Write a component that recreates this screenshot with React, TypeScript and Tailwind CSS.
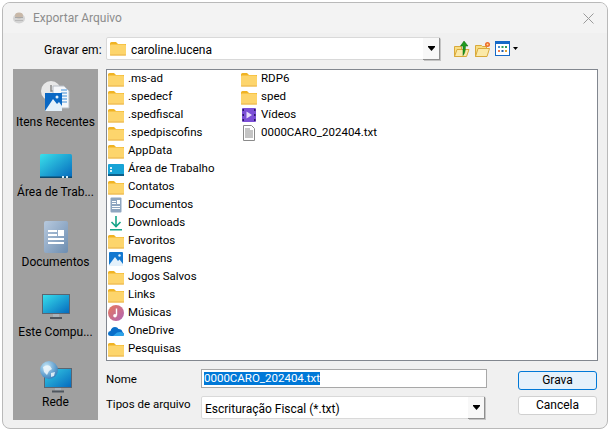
const font = { fontFamily: 'Roboto, sans-serif' };

function FolderIcon() {
  return (
    <svg width="16" height="15" viewBox="0 0 16 15" className="shrink-0">
      <path d="M0 2.500Q0 1 1.500 1H6l2 2h8v3H0z" fill="#f0b323" />
      <rect x="0" y="3.500" width="16" height="11" rx="1" fill="#fdd56c" />
      <rect x="0" y="13.500" width="16" height="1" fill="#e9b44c" />
    </svg>
  );
}

function DesktopSmall() {
  return (
    <svg width="16" height="15" viewBox="0 0 16 15" className="shrink-0">
      <rect x="0" y="2" width="16" height="11" rx="1" fill="#17a3d6" />
      <rect x="0" y="12" width="16" height="2" fill="#0d5f8a" />
      <rect x="2" y="5" width="2" height="2" fill="#d8f3fb" />
      <rect x="2" y="8" width="2" height="2" fill="#d8f3fb" />
    </svg>
  );
}

function DocSmall() {
  return (
    <svg width="16" height="16" viewBox="0 0 16 16" className="shrink-0">
      <rect x="2.500" y="0.500" width="11" height="15" rx="1" fill="#8fa6c0" />
      <rect x="4" y="4" width="4" height="1" fill="#fff" />
      <rect x="4" y="6" width="4" height="1" fill="#fff" />
      <rect x="9" y="3" width="3" height="4" fill="#fff" />
      <rect x="4" y="9" width="8" height="1" fill="#fff" />
      <rect x="4" y="11" width="8" height="1" fill="#fff" />
    </svg>
  );
}

function DownloadSmall() {
  return (
    <svg width="16" height="16" viewBox="0 0 16 16" className="shrink-0">
      <path d="M8 1v10M3.500 7 8 11.500 12.500 7" stroke="#17a589" strokeWidth="1.600" fill="none" />
      <rect x="2" y="14" width="12" height="1.500" fill="#17a589" />
    </svg>
  );
}

function PictureSmall() {
  return (
    <svg width="16" height="16" viewBox="0 0 16 16" className="shrink-0">
      <rect x="1" y="1" width="14" height="14" rx="1" fill="#1278d0" />
      <path d="M1 14 7 6l3 4 1.500-1.500L15 13v2H1z" fill="#e4f1fb" />
      <circle cx="11.500" cy="4.500" r="1.200" fill="#e4f1fb" />
    </svg>
  );
}

function MusicSmall() {
  return (
    <svg width="16" height="16" viewBox="0 0 16 16" className="shrink-0">
      <defs>
        <linearGradient id="mus" x1="0" y1="0" x2="1" y2="1">
          <stop offset="0" stopColor="#e8795a" />
          <stop offset="1" stopColor="#b064b8" />
        </linearGradient>
      </defs>
      <circle cx="8" cy="8" r="8" fill="url(#mus)" />
      <path d="M8.500 3.500v7" stroke="#fff" strokeWidth="1.400" />
      <circle cx="7" cy="10.800" r="1.800" fill="#fff" />
    </svg>
  );
}

function CloudSmall() {
  return (
    <svg width="16" height="12" viewBox="0 0 16 12" className="shrink-0">
      <path d="M3 11Q0 11 0 8.500 0 6.300 2.500 6 3.500 2 7 2q2.500 0 3.500 2Q14 4 14.500 7 16 8 16 9.500 16 11 14 11z" fill="#0a6fc9" />
      <path d="M5 11 9 7.500q3-1 5.500 0Q16 8 16 9.500 16 11 14 11z" fill="#2ea3e8" />
    </svg>
  );
}

function VideoSmall() {
  return (
    <svg width="16" height="16" viewBox="0 0 16 16" className="shrink-0">
      <rect x="1" y="1" width="14" height="14" rx="1" fill="#7b4fd6" />
      <rect x="1.500" y="2" width="1.500" height="2" fill="#2d1a66" />
      <rect x="1.500" y="7" width="1.500" height="2" fill="#2d1a66" />
      <rect x="1.500" y="12" width="1.500" height="2" fill="#2d1a66" />
      <rect x="13" y="2" width="1.500" height="2" fill="#2d1a66" />
      <rect x="13" y="7" width="1.500" height="2" fill="#2d1a66" />
      <rect x="13" y="12" width="1.500" height="2" fill="#2d1a66" />
      <path d="M5.500 4.500v7L11 8z" fill="#e6dcfa" />
    </svg>
  );
}

function TextFileSmall() {
  return (
    <svg width="16" height="16" viewBox="0 0 16 16" className="shrink-0">
      <path d="M2.500 0.500h8l3 3v12h-11z" fill="#fff" stroke="#8a8a8a" />
      <path d="M4 4h5M4 6h8M4 8h8M4 10h8M4 12h8" stroke="#8a8a8a" />
    </svg>
  );
}

function ComboArrow() {
  return (
    <svg width="7" height="5" viewBox="0 0 7 5">
      <path d="M0 0h7v1L3.500 5 0 1z" fill="#000" />
    </svg>
  );
}

function ComboButton({ className }: { className: string }) {
  return (
    <div className={`flex items-center justify-center bg-[#f8f8f8] border-r border-b border-r-[#8f8f8f] border-b-[#8f8f8f] shadow-[1px_1px_0_#c4c4c4] ${className}`}>
      <ComboArrow />
    </div>
  );
}

const files = [
  { name: '.ms-ad', icon: <FolderIcon /> },
  { name: '.spedecf', icon: <FolderIcon /> },
  { name: '.spedfiscal', icon: <FolderIcon /> },
  { name: '.spedpiscofins', icon: <FolderIcon /> },
  { name: 'AppData', icon: <FolderIcon /> },
  { name: 'Área de Trabalho', icon: <DesktopSmall /> },
  { name: 'Contatos', icon: <FolderIcon /> },
  { name: 'Documentos', icon: <DocSmall /> },
  { name: 'Downloads', icon: <DownloadSmall /> },
  { name: 'Favoritos', icon: <FolderIcon /> },
  { name: 'Imagens', icon: <PictureSmall /> },
  { name: 'Jogos Salvos', icon: <FolderIcon /> },
  { name: 'Links', icon: <FolderIcon /> },
  { name: 'Músicas', icon: <MusicSmall /> },
  { name: 'OneDrive', icon: <CloudSmall /> },
  { name: 'Pesquisas', icon: <FolderIcon /> },
  { name: 'RDP6', icon: <FolderIcon /> },
  { name: 'sped', icon: <FolderIcon /> },
  { name: 'Vídeos', icon: <VideoSmall /> },
  { name: '0000CARO_202404.txt', icon: <TextFileSmall /> },
];

function RecentIcon() {
  return (
    <svg width="32" height="32" viewBox="0 0 32 32">
      <circle cx="11" cy="10" r="10" fill="#e8e8e8" />
      <path d="M11 4v6h5" stroke="#8a8a8a" strokeWidth="1.500" fill="none" />
      <path d="M13 5h11l5 5v17H13z" fill="#f5f7fa" stroke="#b8bec6" />
      <path d="M21 9h6M21 12h6M21 15h6M21 18h6M21 21h6" stroke="#3f8fd8" />
      <rect x="5" y="12" width="17" height="18" fill="#0a68c4" />
      <path d="M5 30 13 18l4 5 2-2 3 4v5z" fill="#e4f1fb" />
      <circle cx="17" cy="16" r="1.500" fill="#e4f1fb" />
    </svg>
  );
}

function DesktopIcon() {
  return (
    <svg width="32" height="26" viewBox="0 0 32 26">
      <defs>
        <linearGradient id="desk" x1="0" y1="0" x2="1" y2="1">
          <stop offset="0" stopColor="#3ae0ea" />
          <stop offset="1" stopColor="#0468bd" />
        </linearGradient>
      </defs>
      <rect x="0" y="0" width="32" height="24" rx="1.500" fill="url(#desk)" />
      <rect x="0" y="22.500" width="32" height="1.500" fill="#0c4a6e" />
      <rect x="22" y="22" width="2" height="2" fill="#d5eef8" />
      <rect x="26" y="22" width="2" height="2" fill="#d5eef8" />
    </svg>
  );
}

function DocumentsIcon() {
  return (
    <svg width="24" height="32" viewBox="0 0 24 32">
      <defs>
        <linearGradient id="docs" x1="0" y1="0" x2="1" y2="1">
          <stop offset="0" stopColor="#b7c9de" />
          <stop offset="1" stopColor="#6d8db0" />
        </linearGradient>
      </defs>
      <rect width="24" height="32" rx="2" fill="url(#docs)" />
      <rect x="4" y="9" width="9" height="2" fill="#fff" />
      <rect x="4" y="13" width="9" height="2" fill="#fff" />
      <rect x="14" y="9" width="6" height="6" fill="#fff" />
      <rect x="4" y="17" width="16" height="2" fill="#fff" />
      <rect x="4" y="21" width="16" height="2" fill="#fff" />
    </svg>
  );
}

function ComputerIcon() {
  return (
    <svg width="28" height="26" viewBox="0 0 28 26">
      <defs>
        <linearGradient id="comp" x1="0" y1="0" x2="1" y2="1">
          <stop offset="0" stopColor="#38e0ec" />
          <stop offset="1" stopColor="#0468bd" />
        </linearGradient>
      </defs>
      <rect x="0.500" y="0.500" width="27" height="19" fill="url(#comp)" stroke="#5b6470" />
      <rect x="11" y="20" width="6" height="3" fill="#a9b2ba" />
      <rect x="8" y="23" width="12" height="2" fill="#4f565e" />
    </svg>
  );
}

function NetworkIcon() {
  return (
    <svg width="32" height="32" viewBox="0 0 32 32">
      <defs>
        <linearGradient id="net" x1="0" y1="0" x2="1" y2="1">
          <stop offset="0" stopColor="#38d0e6" />
          <stop offset="1" stopColor="#0468bd" />
        </linearGradient>
        <radialGradient id="globe" cx="0.350" cy="0.300" r="0.800">
          <stop offset="0" stopColor="#c5e6f6" />
          <stop offset="1" stopColor="#2b78b8" />
        </radialGradient>
      </defs>
      <rect x="4.500" y="7.500" width="27" height="19" fill="url(#net)" stroke="#5b6470" />
      <rect x="15" y="27" width="6" height="2.500" fill="#a9b2ba" />
      <rect x="12" y="29.500" width="12" height="2" fill="#4f565e" />
      <circle cx="9" cy="9" r="9" fill="url(#globe)" />
      <path d="M3 6q4-3 7-1l2 3-3 2-2 4-3-3zM11 12l4-1-1 4-3 1z" fill="#f1f8fc" opacity="0.850" />
    </svg>
  );
}

function UpFolderIcon() {
  return (
    <svg width="16" height="18" viewBox="0 0 16 18">
      <path d="M0.500 6.500h7v10h-7z" fill="#f7dd85" stroke="#d9a93a" />
      <path d="M0.500 16.500 3 9.500h12l-2.500 7z" fill="#fbe9a8" stroke="#d9a93a" />
      <path d="M9 15.500V6H6.500L10 1l4 5h-2.500q0 5-1 7z" fill="#1f9a1f" stroke="#0f6a0f" strokeWidth="0.500" />
    </svg>
  );
}

function NewFolderIcon() {
  return (
    <svg width="16" height="16" viewBox="0 0 16 16">
      <path d="M0.500 4.500h6l1 1h4v10h-11z" fill="#f7dd85" stroke="#d9a93a" />
      <path d="M0.500 15.500 3 7.500h11.500l-2.500 8z" fill="#fbe9a8" stroke="#d9a93a" />
      <circle cx="12.500" cy="3.500" r="2.500" fill="#ee6a2a" />
      <circle cx="12.500" cy="3.500" r="1" fill="#ffe08a" />
    </svg>
  );
}

function ViewIcon() {
  return (
    <svg width="15" height="15" viewBox="0 0 15 15">
      <rect x="0.500" y="0.500" width="14" height="14" fill="#fff" stroke="#1569c7" />
      <rect x="0.500" y="0.500" width="14" height="2.500" fill="#1569c7" />
      <rect x="3" y="5" width="2" height="2" fill="#4d8fcf" />
      <rect x="6.500" y="5" width="2" height="2" fill="#2c9c5a" />
      <rect x="10" y="5" width="2" height="2" fill="#2c9c5a" />
      <rect x="3" y="9" width="2" height="2" fill="#ee7d4d" />
      <rect x="6.500" y="9" width="2" height="2" fill="#1f5fb0" />
      <rect x="10" y="9" width="2" height="2" fill="#e0a030" />
    </svg>
  );
}

function AppIcon() {
  return (
    <svg width="14" height="14" viewBox="0 0 14 14">
      <ellipse cx="7" cy="7.500" rx="6" ry="5" fill="#d4d4d4" />
      <ellipse cx="7" cy="4.500" rx="4" ry="3" fill="#c8b8a8" />
      <rect x="3" y="6" width="8" height="1" fill="#a8a8a8" />
      <rect x="3" y="9" width="8" height="1" fill="#b8b8b8" />
    </svg>
  );
}

function SideItem({ icon, label }: { icon: React.ReactNode; label: string }) {
  return (
    <div className="h-[70px] flex flex-col items-center">
      <div className="h-[32px] flex items-center justify-center">{icon}</div>
      <div className="mt-[1px] h-[16px] leading-[16px] text-[12px] text-black whitespace-nowrap">{label}</div>
    </div>
  );
}

export default function App() {
  return (
    <div className="w-[610px] h-[430px] bg-white overflow-hidden text-[12px] text-black" style={font}>
      <div className="ml-[2px] mt-[2px] w-[606px] h-[427px] bg-[#f0f0f0] border border-[#b9b9b9] rounded-[8px] overflow-hidden">
        {/* title bar */}
        <div className="h-[30px] bg-[#f3f3f3] flex items-center pl-[9px]">
          <AppIcon />
          <span className="ml-[7px] text-[12px] text-[#8c8c8c]">Exportar Arquivo</span>
          <svg width="11" height="11" viewBox="0 0 11 11" className="ml-auto mr-[13px]">
            <path d="M0.500 0.500l10 10M10.500 0.500l-10 10" stroke="#9a9a9a" strokeWidth="1" />
          </svg>
        </div>

        <div className="pl-[10px]">
          {/* save in */}
          <div className="mt-[4px] h-[23px] flex items-center">
            <div className="w-[85px] pl-[31px] pt-[2px] whitespace-nowrap text-[12px]">Gravar em:</div>
            <div className="ml-[8px] w-[335px] h-[23px] bg-white border border-[#d9d9d9] rounded-[2px] flex items-center pl-[3px] relative">
              <FolderIcon />
              <span className="ml-[5px] pt-[2px] text-[12px]">caroline.lucena</span>
              <ComboButton className="absolute right-0 top-0 w-[17px] h-[22px]" />
            </div>
            <div className="ml-[13px] flex items-center">
              <UpFolderIcon />
              <div className="ml-[5px]"><NewFolderIcon /></div>
              <div className="ml-[4px]"><ViewIcon /></div>
              <svg width="5" height="3" viewBox="0 0 5 3" className="ml-[3px]"><path d="M0 0h5L2.500 3z" fill="#000" /></svg>
            </div>
          </div>

          <div className="mt-[9px] flex">
            {/* places */}
            <div className="w-[85px] h-[351px] bg-[#a0a0a0] pt-[12px]">
              <SideItem icon={<RecentIcon />} label="Itens Recentes" />
              <SideItem icon={<DesktopIcon />} label="Área de Trab..." />
              <SideItem icon={<DocumentsIcon />} label="Documentos" />
              <SideItem icon={<ComputerIcon />} label="Este Compu..." />
              <SideItem icon={<NetworkIcon />} label="Rede" />
            </div>

            <div className="ml-[8px] w-[492px]">
              {/* file list */}
              <div className="h-[292px] bg-white border border-[#82878f] grid grid-flow-col grid-rows-[repeat(16,18px)] auto-cols-[133px] justify-start">
                {files.map((f) => (
                  <div key={f.name} className="flex items-center pl-[1px] h-[18px]">
                    <div className="w-[16px] flex justify-center">{f.icon}</div>
                    <span className="ml-[4px] text-[11.500px] whitespace-nowrap">{f.name}</span>
                  </div>
                ))}
              </div>

              {/* name */}
              <div className="mt-[8px] flex items-start">
                <div className="w-[95px] h-[19px] leading-[20px] text-[11.500px]">Nome</div>
                <div className="w-[286px] h-[19px] bg-white border border-[#a8a8a8] flex items-center pl-[2px]">
                  <span className="bg-[#0078d7] text-white text-[11.500px] leading-[13px] h-[13px] whitespace-nowrap">0000CARO_202404.txt</span>
                </div>
                <button className="ml-[31px] mt-[2px] w-[79px] h-[19px] bg-[#e5f1fb] border border-[#0078d7] rounded-[3px] text-[12px] leading-[17px]">Grava</button>
              </div>

              {/* type */}
              <div className="mt-[6px] flex items-start">
                <div className="w-[95px] h-[16px] leading-[16px] text-[11.500px]">Tipos de arquivo</div>
                <div className="w-[285px] h-[23px] bg-white border border-[#d9d9d9] rounded-[2px] flex items-center pl-[3px] relative">
                  <span className="pt-[2px] text-[12px]">Escrituração Fiscal (*.txt)</span>
                  <ComboButton className="absolute right-0 top-0 w-[17px] h-[22px]" />
                </div>
                <button className="ml-[32px] w-[79px] h-[19px] bg-white border border-[#d0d0d0] rounded-[3px] text-[12px] leading-[17px]">Cancela</button>
              </div>
            </div>
          </div>
        </div>
      </div>
    </div>
  );
}
